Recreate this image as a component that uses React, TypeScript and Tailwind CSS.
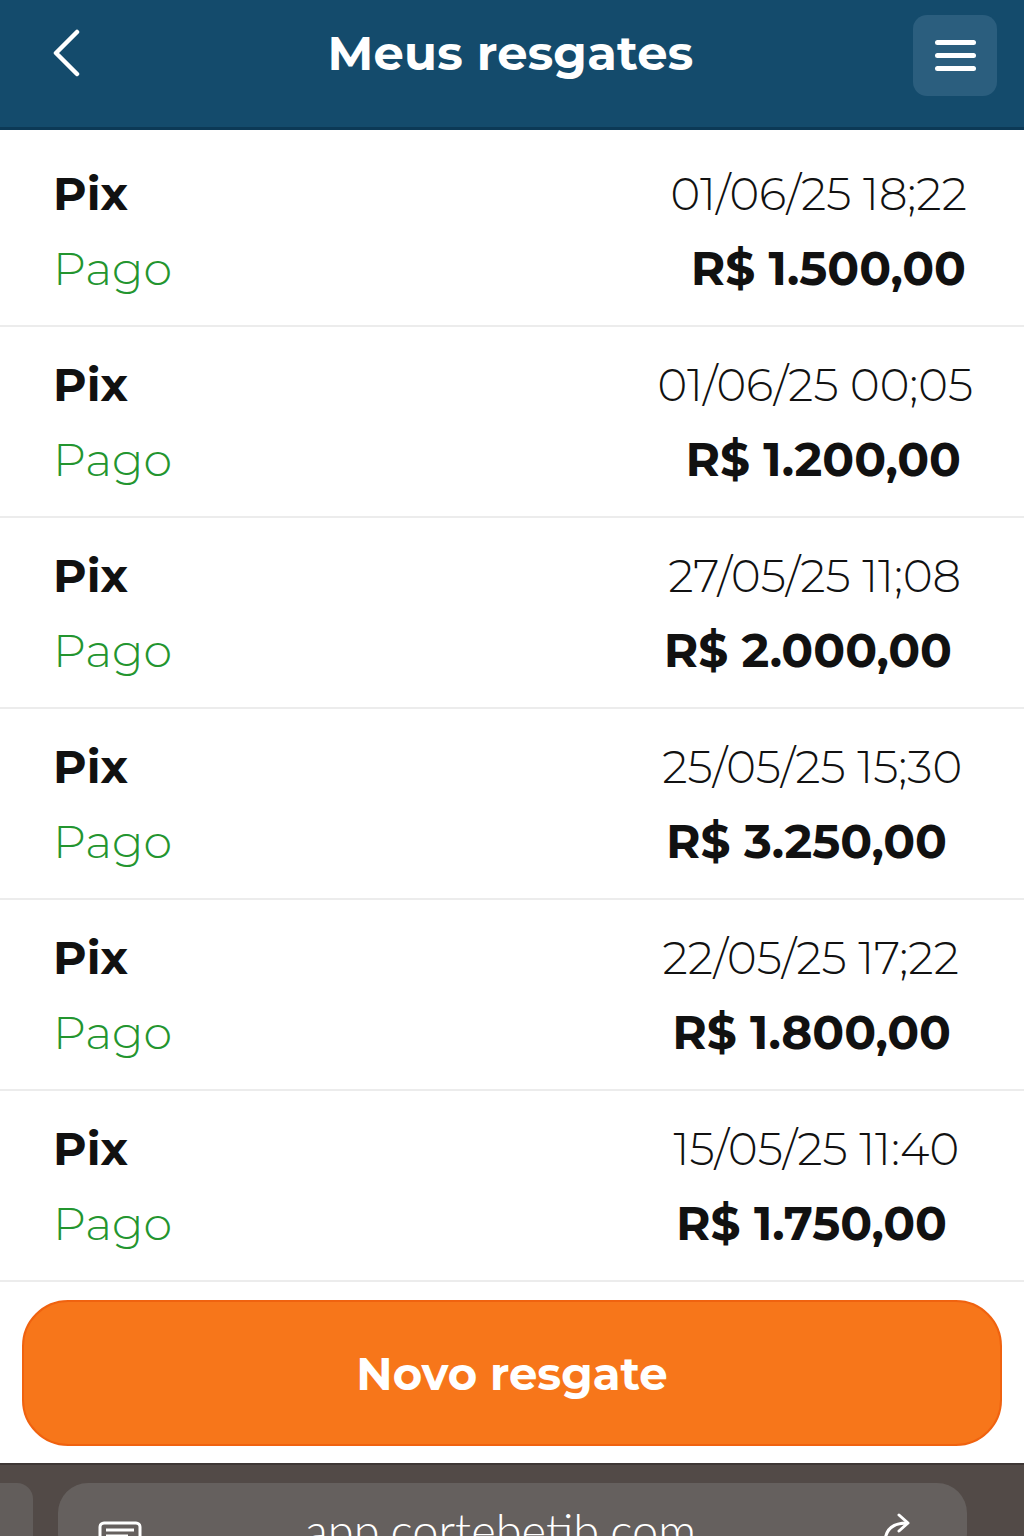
import React from "react";

const rows = [
  { date: "01/06/25 18;22", amount: "R$ 1.500,00", dateCls: "mr-[4px]", amtCls: "mr-[5px]" },
  { date: "01/06/25 00;05", amount: "R$ 1.200,00", dateCls: "mr-[-2px]", amtCls: "mr-[10px]" },
  { date: "27/05/25 11;08", amount: "R$ 2.000,00", dateCls: "mr-[10px]", amtCls: "mr-[19px]" },
  { date: "25/05/25 15;30", amount: "R$ 3.250,00", dateCls: "mr-[9px]", amtCls: "mr-[24px]" },
  { date: "22/05/25 17;22", amount: "R$ 1.800,00", dateCls: "mr-[12px]", amtCls: "mr-[20px]" },
  { date: "15/05/25 11:40", amount: "R$ 1.750,00", dateCls: "mr-[12px]", amtCls: "mr-[24px]" },
];

const font = "font-['Montserrat','Open_Sans','Noto_Sans',sans-serif]";

export default function App() {
  return (
    <div className={`w-[1024px] h-[1536px] overflow-hidden bg-white flex flex-col ${font}`}>
      {/* Header */}
      <div className="h-[130px] shrink-0 bg-[#144b6c] border-b-[3px] border-[#0c3956] flex items-center px-[16px] relative">
        <div className="w-[80px] h-[80px] flex items-center justify-center -mt-[22px] ml-[10px]">
          <svg width="30" height="48" viewBox="0 0 30 48" fill="none">
            <path d="M26 3 L5 24 L26 45" stroke="white" strokeWidth="4.5" strokeLinecap="round" strokeLinejoin="round" />
          </svg>
        </div>
        <div className="flex-1 text-center text-white font-bold text-[48px] leading-none -mt-[22px] tracking-[0.2px] pl-[2px]">
          Meus resgates
        </div>
        <div className="w-[84px] h-[81px] rounded-[14px] bg-[#2b5e7e] flex flex-col items-center justify-center gap-[8px] -mt-[16px] mr-[11px]">
          <div className="w-[41px] h-[5px] rounded-full bg-white" />
          <div className="w-[41px] h-[5px] rounded-full bg-white" />
          <div className="w-[41px] h-[5px] rounded-full bg-white" />
        </div>
      </div>

      {/* Rows */}
      <div className="flex flex-col mt-[6px]">
        {rows.map((r, i) => (
          <div key={i} className="h-[191px] border-b-[2px] border-[#ececec] flex justify-between pl-[53px] pr-[53px] pt-[20px]">
            <div className="flex flex-col">
              <div className="text-[46px] leading-[75px] font-bold text-[#111]">Pix</div>
              <div className="text-[46px] leading-[75px] font-light text-[#23952f]">Pago</div>
            </div>
            <div className="flex flex-col items-end">
              <div className={`text-[45px] leading-[75px] font-light text-[#111] ${r.dateCls}`}>{r.date}</div>
              <div className={`text-[47px] leading-[75px] font-bold text-[#111] ${r.amtCls}`}>{r.amount}</div>
            </div>
          </div>
        ))}
      </div>

      {/* Button */}
      <div className="px-[22px] pt-[18px]">
        <div className="h-[146px] rounded-[46px] bg-[#f7761a] border-[2px] border-[#f0620f] flex items-center justify-center">
          <span className="text-white font-bold text-[45px] leading-none">Novo resgate</span>
        </div>
      </div>

      {/* Browser bar */}
      <div className="mt-[17px] flex-1 bg-[#524a47] border-t-[2px] border-[#3e3735] flex pt-[18px] gap-[25px] overflow-hidden">
        <div className="w-[33px] h-[80px] shrink-0 rounded-r-[16px] bg-[#625d5b]" />
        <div className="w-[909px] h-[80px] shrink-0 rounded-[30px] bg-[#65605e] flex items-start px-[40px] pt-[36px] relative">
          <svg width="44" height="30" viewBox="0 0 44 30" fill="none" className="mt-[2px]">
            <rect x="2" y="2" width="40" height="30" rx="4" stroke="white" strokeWidth="3" />
            <line x1="8" y1="9" x2="36" y2="9" stroke="white" strokeWidth="3" />
            <line x1="8" y1="15" x2="30" y2="15" stroke="white" strokeWidth="3" />
          </svg>
          <div className="flex-1 text-center text-white text-[47px] leading-none font-light font-['Lato',sans-serif] -mt-[12px] pr-[20px]">
            app.cortebetib.com
          </div>
          <svg width="34" height="34" viewBox="0 0 34 34" fill="none" className="mr-[14px] -mt-[8px]">
            <path d="M6 32 C6 18 14 12 28 12" stroke="white" strokeWidth="3" strokeLinecap="round" />
            <path d="M20 4 L29 12 L20 20" stroke="white" strokeWidth="3" strokeLinecap="round" strokeLinejoin="round" />
          </svg>
        </div>
      </div>
    </div>
  );
}
